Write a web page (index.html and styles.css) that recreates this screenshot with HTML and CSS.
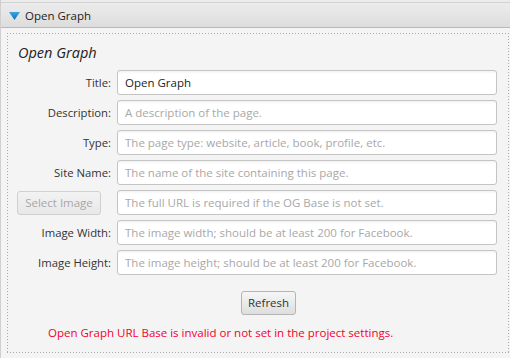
FILE: index.html
```html
<!DOCTYPE html>
<html>
<head>
<meta charset="utf-8">
<link rel="stylesheet" href="styles.css">
</head>
<body>
<div class="pane">
  <div class="header">
    <svg class="arrow" width="11" height="8" viewBox="0 0 11 8">
      <defs>
        <linearGradient id="ag" x1="0" y1="0" x2="0" y2="1">
          <stop offset="0" stop-color="#3aa6e6"/>
          <stop offset="1" stop-color="#0f6fb4"/>
        </linearGradient>
      </defs>
      <polygon points="0,0 11,0 5.5,8" fill="url(#ag)"/>
    </svg>
    <span class="header-title">Open Graph</span>
  </div>
  <div class="content">
    <div class="box">
      <div class="box-title">Open Graph</div>
      <div class="form">
        <label class="lbl">Title:</label>
        <div class="field"><span class="val">Open Graph</span></div>
        <label class="lbl">Description:</label>
        <div class="field"><span class="ph">A description of the page.</span></div>
        <label class="lbl">Type:</label>
        <div class="field"><span class="ph">The page type: website, article, book, profile, etc.</span></div>
        <label class="lbl">Site Name:</label>
        <div class="field"><span class="ph">The name of the site containing this page.</span></div>
        <div class="lbl-btn"><button class="btn disabled">Select Image</button></div>
        <div class="field"><span class="ph">The full URL is required if the OG Base is not set.</span></div>
        <label class="lbl">Image Width:</label>
        <div class="field"><span class="ph">The image width; should be at least 200 for Facebook.</span></div>
        <label class="lbl">Image Height:</label>
        <div class="field"><span class="ph">The image height; should be at least 200 for Facebook.</span></div>
      </div>
      <div class="actions"><button class="btn">Refresh</button></div>
      <div class="error">Open Graph URL Base is invalid or not set in the project settings.</div>
    </div>
  </div>
</div>
</body>
</html>
```

FILE: styles.css
```css
html, body {
  margin: 0;
  padding: 0;
}
body {
  width: 510px;
  height: 358px;
  background: #f4f4f4;
  font-family: "Open Sans", "Noto Sans", sans-serif;
  font-size: 11.5px;
  color: #333333;
  overflow: hidden;
}
.pane {
  height: 358px;
  border-left: 1px solid #cfcfcf;
  box-sizing: border-box;
  padding-top: 2px;
  background: #ececec;
}
.header {
  height: 24px;
  border-top: 1px solid #d2d2d2;
  border-bottom: 1px solid #b9b9b9;
  background: linear-gradient(to bottom, #ececec, #dddddd);
  display: flex;
  align-items: center;
  padding-left: 8px;
}
.arrow {
  display: block;
  margin-top: 1px;
}
.header-title {
  margin-left: 5px;
  font-size: 11.5px;
  color: #222;
}
.content {
  background: #f4f4f4;
  padding: 5px 1px 5px 6px;
  height: 330px;
  box-sizing: border-box;
}
.box {
  height: 320px;
  box-sizing: border-box;
  padding: 0 10px 0 10px;
  background:
    linear-gradient(to right, #a9a9a9 1px, transparent 1px) left top / 3px 1px repeat-x,
    linear-gradient(to right, #a9a9a9 1px, transparent 1px) left bottom / 3px 1px repeat-x,
    linear-gradient(to bottom, #a9a9a9 1px, transparent 1px) left top / 1px 3px repeat-y,
    linear-gradient(to bottom, #a9a9a9 1px, transparent 1px) right top / 1px 3px repeat-y,
    #f4f4f4;
}
.box-title {
  font-style: italic;
  font-size: 14.5px;
  color: #222;
  padding-top: 10px;
  height: 37px;
  line-height: 20px;
  box-sizing: border-box;
  padding-left: 1px;
}
.form {
  display: grid;
  grid-template-columns: 94px 380px;
  column-gap: 6px;
  row-gap: 5px;
}
.lbl {
  text-align: right;
  align-self: center;
  white-space: nowrap;
  color: #333;
  font-size: 11.3px;
}
.lbl-btn {
  display: flex;
  align-items: center;
}
.field {
  height: 25px;
  box-sizing: border-box;
  border: 1px solid #c4c4c4;
  border-radius: 3px;
  background: linear-gradient(to bottom, #f3f3f3 0, #ffffff 3px, #ffffff 100%);
  display: flex;
  align-items: center;
  padding-left: 7px;
  white-space: nowrap;
  overflow: hidden;
}
.val {
  color: #222;
}
.ph {
  color: #a8a8a8;
}
.btn {
  font-family: inherit;
  font-size: 11.5px;
  height: 24px;
  padding: 0 6px;
  border: 1px solid #b4b4b4;
  border-radius: 3px;
  background: linear-gradient(to bottom, #f6f6f6, #dedede);
  color: #333;
  line-height: 20px;
  white-space: nowrap;
}
.btn.disabled {
  width: 84px;
  padding: 0;
  border-color: #d0d0d0;
  background: linear-gradient(to bottom, #f3f3f3, #e8e8e8);
  color: #a8a8a8;
}
.actions {
  display: flex;
  padding-left: 224px;
  margin-top: 16px;
}
.error {
  color: #f2002e;
  margin-top: 10px;
  padding-left: 31px;
}
```
